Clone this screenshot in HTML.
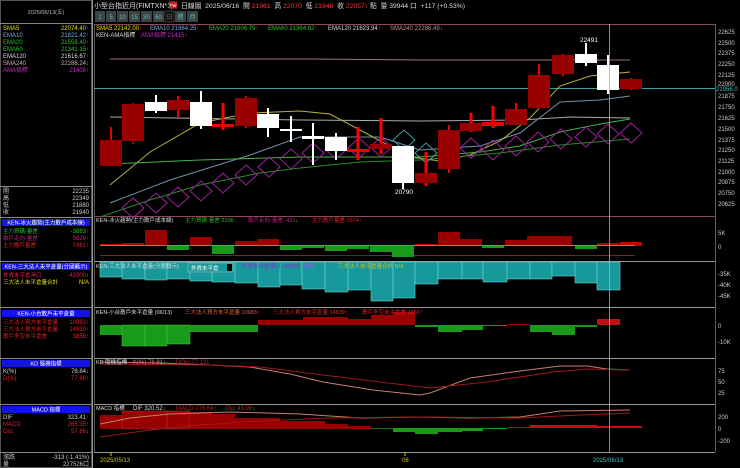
<!DOCTYPE html>
<html><head><meta charset="utf-8">
<style>
html,body{margin:0;padding:0;background:#000;}
svg{display:block;font-family:"Liberation Sans","Noto Sans CJK TC",sans-serif;}
.s{font-size:6px;}
</style></head>
<body>
<svg width="740" height="468" viewBox="0 0 740 468" xmlns="http://www.w3.org/2000/svg">
<rect width="740" height="468" fill="#000"/>

<!-- LEFT PANEL -->
<g class="s">
<rect x="0.5" y="0.5" width="91" height="467" fill="none" stroke="#555"/>
<line x1="92.5" y1="0" x2="92.5" y2="468" stroke="#999"/>
<text x="46" y="14" fill="#bbb" text-anchor="middle" font-size="5.5">2025/06/13(五)</text>
<line x1="0" y1="23.5" x2="92" y2="23.5" stroke="#888"/>
<text x="3" y="30" fill="#e8e000">SMA5</text><text x="89" y="30" fill="#e8e000" text-anchor="end">22074.40<tspan fill="#f33">↑</tspan></text>
<text x="3" y="37" fill="#7ab0e0">EMA10</text><text x="89" y="37" fill="#7ab0e0" text-anchor="end">21821.42<tspan fill="#f33">↑</tspan></text>
<text x="3" y="44" fill="#2cc02c">EMA20</text><text x="89" y="44" fill="#2cc02c" text-anchor="end">21559.40<tspan fill="#f33">↑</tspan></text>
<text x="3" y="51" fill="#2cc02c">EMA60</text><text x="89" y="51" fill="#2cc02c" text-anchor="end">21341.15<tspan fill="#f33">↑</tspan></text>
<text x="3" y="58" fill="#ddd">EMA120</text><text x="89" y="58" fill="#ddd" text-anchor="end">21616.67<tspan fill="#f33">↑</tspan></text>
<text x="3" y="65" fill="#d0b0b0">SMA240</text><text x="89" y="65" fill="#d0b0b0" text-anchor="end">22288.24<tspan fill="#2e2">↓</tspan></text>
<text x="3" y="72" fill="#d020d0">AMA指標</text><text x="89" y="72" fill="#d020d0" text-anchor="end">21408<tspan fill="#f33">↑</tspan></text>

<line x1="0" y1="186.5" x2="92" y2="186.5" stroke="#888"/>
<text x="3" y="193" fill="#ccc">開</text><text x="89" y="193" fill="#ccc" text-anchor="end">22235</text>
<text x="3" y="200" fill="#ccc">高</text><text x="89" y="200" fill="#ccc" text-anchor="end">22349</text>
<text x="3" y="207" fill="#ccc">低</text><text x="89" y="207" fill="#ccc" text-anchor="end">21880</text>
<text x="3" y="214" fill="#ccc">收</text><text x="89" y="214" fill="#ccc" text-anchor="end">21940</text>

<line x1="0" y1="217.5" x2="92" y2="217.5" stroke="#888"/>
<rect x="2" y="219" width="88" height="7" fill="#1414e0"/>
<text x="46" y="224.5" fill="#fff" text-anchor="middle" font-size="5.5">KEN-冰火趨勢(主力散戶成本線)</text>
<text x="3" y="233" fill="#2cc02c" font-size="5.5">主力買碼-量差</text><text x="89" y="233" fill="#2cc02c" text-anchor="end">-3883<tspan fill="#f33">↑</tspan></text>
<text x="3" y="240" fill="#c02080" font-size="5.5">散戶走向-量差</text><text x="89" y="240" fill="#c02080" text-anchor="end">5629<tspan fill="#f33">↑</tspan></text>
<text x="3" y="247" fill="#e02020" font-size="5.5">主力散戶量差</text><text x="89" y="247" fill="#e02020" text-anchor="end">7481<tspan fill="#f33">↑</tspan></text>

<line x1="0" y1="261.5" x2="92" y2="261.5" stroke="#888"/>
<rect x="2" y="263" width="88" height="7" fill="#1414e0"/>
<text x="46" y="268.5" fill="#fff" text-anchor="middle" font-size="5.5">KEN-三大法人未平倉量(分國籍示)</text>
<text x="3" y="277" fill="#e02050" font-size="5.5">外資未平倉淨口</text><text x="89" y="277" fill="#e02050" text-anchor="end">-42000<tspan fill="#2e2">↓</tspan></text>
<text x="3" y="284" fill="#e0e020" font-size="5.5">三大法人未平倉量合計</text><text x="89" y="284" fill="#e0e020" text-anchor="end">N/A</text>

<line x1="0" y1="307.5" x2="92" y2="307.5" stroke="#888"/>
<rect x="2" y="310" width="88" height="7" fill="#1414e0"/>
<text x="46" y="315.5" fill="#fff" text-anchor="middle" font-size="5.5">KEN-小台散戶未平倉量</text>
<text x="3" y="324" fill="#e02020" font-size="5.5">三大法人買方未平倉量</text><text x="89" y="324" fill="#e02020" text-anchor="end">10983<tspan fill="#f33">↑</tspan></text>
<text x="3" y="331" fill="#e02020" font-size="5.5">三大法人賣方未平倉量</text><text x="89" y="331" fill="#e02020" text-anchor="end">14839<tspan fill="#f33">↑</tspan></text>
<text x="3" y="338" fill="#e02020" font-size="5.5">散戶多空未平倉差</text><text x="89" y="338" fill="#e02020" text-anchor="end">3856<tspan fill="#f33">↑</tspan></text>

<line x1="0" y1="358.5" x2="92" y2="358.5" stroke="#888"/>
<rect x="2" y="360" width="88" height="7" fill="#1414e0"/>
<text x="46" y="365.5" fill="#fff" text-anchor="middle" font-size="5.5">KD 隨機指標</text>
<text x="3" y="373" fill="#ccc">K(%)</text><text x="89" y="373" fill="#ccc" text-anchor="end">78.84<tspan fill="#2e2">↓</tspan></text>
<text x="3" y="380" fill="#e02020">D(%)</text><text x="89" y="380" fill="#e02020" text-anchor="end">77.68<tspan fill="#f33">↑</tspan></text>

<line x1="0" y1="404.5" x2="92" y2="404.5" stroke="#888"/>
<rect x="2" y="406" width="88" height="7" fill="#1414e0"/>
<text x="46" y="411.5" fill="#fff" text-anchor="middle" font-size="5.5">MACD 指標</text>
<text x="3" y="419" fill="#ccc">DIF</text><text x="89" y="419" fill="#ccc" text-anchor="end">323.41<tspan fill="#f33">↑</tspan></text>
<text x="3" y="426" fill="#e02020">MACD</text><text x="89" y="426" fill="#e02020" text-anchor="end">265.35<tspan fill="#f33">↑</tspan></text>
<text x="3" y="433" fill="#e02020">Osc</text><text x="89" y="433" fill="#e02020" text-anchor="end">57.88<tspan fill="#2e2">↓</tspan></text>

<line x1="0" y1="452.5" x2="92" y2="452.5" stroke="#888"/>
<text x="3" y="459" fill="#ccc">漲跌</text><text x="89" y="459" fill="#ccc" text-anchor="end">-313 (-1.41%)</text>
<text x="3" y="466" fill="#ccc">量</text><text x="89" y="466" fill="#ccc" text-anchor="end">227526口</text>
</g>

<!-- TOP BAR -->
<g>
<text x="94" y="8" fill="#ddd" font-size="7">小型台指近月(FIMTXN*1)</text>
<rect x="169" y="1.5" width="8" height="7" fill="#d02020"/>
<text x="173" y="7" fill="#fff" font-size="4.5" text-anchor="middle">TW</text>
<text x="181" y="8" fill="#ddd" font-size="6.8">日線圖 &#160;2025/06/16 &#160;開 <tspan fill="#f33">21961</tspan> &#160;高 <tspan fill="#f33">22070</tspan> &#160;低 <tspan fill="#f33">21948</tspan> &#160;收 <tspan fill="#f33">22057</tspan><tspan fill="#f33">↑</tspan> 點 &#160;量 39944 口 &#160;+117 (+0.53%)</text>
<g font-size="6" text-anchor="middle" fill="#5fc0c0">
<rect x="95" y="11" width="10" height="11" fill="#3a4444"/><text x="100" y="19">1</text>
<rect x="106" y="11" width="10" height="11" fill="#3a4444"/><text x="111" y="19">5</text>
<rect x="117" y="11" width="11" height="11" fill="#3a4444"/><text x="122.5" y="19">10</text>
<rect x="129" y="11" width="11" height="11" fill="#3a4444"/><text x="134.5" y="19">15</text>
<rect x="141" y="11" width="11" height="11" fill="#3a4444"/><text x="146.5" y="19">30</text>
<rect x="153" y="11" width="11" height="11" fill="#3a4444"/><text x="158.5" y="19">60</text>
<rect x="165" y="11" width="9" height="11" fill="#111" stroke="#333"/><text x="169.5" y="19" fill="#777">日</text>
<rect x="175" y="11" width="11" height="11" fill="#3a4444"/><text x="180.5" y="19">週</text>
<rect x="187" y="11" width="11" height="11" fill="#3a4444"/><text x="192.5" y="19">月</text>
</g>
</g>

<!-- PANEL FRAMES -->
<g fill="none">
<line x1="94" y1="24.5" x2="715" y2="24.5" stroke="#8a4a5a"/>
<line x1="94" y1="216.5" x2="715" y2="216.5" stroke="#8a4a5a"/>
<line x1="94" y1="261.5" x2="715" y2="261.5" stroke="#999"/>
<line x1="94" y1="307.5" x2="715" y2="307.5" stroke="#999"/>
<line x1="94" y1="358.5" x2="715" y2="358.5" stroke="#999"/>
<line x1="94" y1="404.5" x2="715" y2="404.5" stroke="#999"/>
<line x1="94" y1="452.5" x2="715" y2="452.5" stroke="#999"/>
<line x1="715.5" y1="24" x2="715.5" y2="452" stroke="#8a4a5a"/>
<line x1="94.5" y1="24" x2="94.5" y2="452" stroke="#555"/>
</g>

<!-- MAIN CHART LINES -->
<g fill="none" stroke-width="1">
<polyline stroke="#a07070" points="110,59 310,59 420,60 630,60"/>
<line x1="94" y1="88.5" x2="715" y2="88.5" stroke="#3aa0a0"/>
<polyline stroke="#aaa" points="110,117 300,120 420,121 520,120 570,117 630,118"/>
<polyline stroke="#7090a8" points="110,203 170,180 250,155 300,137 380,137 420,150 480,146 520,133 560,102 600,100 630,96"/>
<polyline stroke="#b8b040" points="110,185 150,152 200,123 250,113 300,111 330,114 360,130 410,157 440,161 470,155 500,141 530,118 560,86 590,76 630,72"/>
<polyline stroke="#48b048" points="110,164 200,160 300,157 420,157 480,152 520,146 560,132 600,124 630,119"/>
<polyline stroke="#2a8a2a" points="100,217 150,200 200,185 260,173 300,168 360,162 420,160 500,153 560,145 630,139"/>
</g>
<!-- AMA diamonds -->
<g fill="none" stroke="#a020a0" stroke-width="1">
<path d="M122,208 l11,-10 l11,10 l-11,10z M145,203 l11,-10 l11,10 l-11,10z M167,197 l11,-10 l11,10 l-11,10z M190,191 l11,-10 l11,10 l-11,10z M212,183 l11,-10 l11,10 l-11,10z M235,175 l11,-10 l11,10 l-11,10z M258,167 l11,-10 l11,10 l-11,10z M280,159 l11,-10 l11,10 l-11,10z M302,153 l11,-10 l11,10 l-11,10z M325,149 l11,-10 l11,10 l-11,10z M348,148 l11,-10 l11,10 l-11,10z M370,147 l11,-10 l11,10 l-11,10z M438,150 l11,-10 l11,10 l-11,10z M460,148 l11,-10 l11,10 l-11,10z M482,150 l11,-10 l11,10 l-11,10z M505,146 l11,-10 l11,10 l-11,10z M527,142 l11,-10 l11,10 l-11,10z M550,139 l11,-10 l11,10 l-11,10z M575,137 l11,-10 l11,10 l-11,10z M597,134 l11,-10 l11,10 l-11,10z M620,133 l11,-10 l11,10 l-11,10z"/>
</g>
<path d="M393,140 l11,-10 l11,10 l-11,10z M415,153 l11,-10 l11,10 l-11,10z" fill="none" stroke="#40a0a0"/>

<!-- CANDLES -->
<g>
<g stroke-width="2">
<line x1="111" y1="127" x2="111" y2="166" stroke="#e00"/>
<line x1="133" y1="103" x2="133" y2="144" stroke="#900"/>
<line x1="156" y1="95" x2="156" y2="113" stroke="#fff"/>
<line x1="178" y1="96" x2="178" y2="117" stroke="#e00"/>
<line x1="201" y1="91" x2="201" y2="129" stroke="#fff"/>
<line x1="223" y1="103" x2="223" y2="130" stroke="#f00" stroke-width="3"/>
<line x1="246" y1="96" x2="246" y2="128" stroke="#e00"/>
<line x1="268" y1="108" x2="268" y2="137" stroke="#fff"/>
<line x1="291" y1="116" x2="291" y2="142" stroke="#fff"/>
<line x1="313" y1="123" x2="313" y2="165" stroke="#fff"/>
<line x1="336" y1="133" x2="336" y2="160" stroke="#fff"/>
<line x1="358" y1="127" x2="358" y2="160" stroke="#f00" stroke-width="3"/>
<line x1="381" y1="118" x2="381" y2="154" stroke="#f00" stroke-width="3"/>
<line x1="403" y1="146" x2="403" y2="189" stroke="#fff"/>
<line x1="426" y1="152" x2="426" y2="186" stroke="#f00" stroke-width="3"/>
<line x1="449" y1="125" x2="449" y2="173" stroke="#e00"/>
<line x1="471" y1="113" x2="471" y2="132" stroke="#f00" stroke-width="3"/>
<line x1="493" y1="106" x2="493" y2="128" stroke="#f00" stroke-width="3"/>
<line x1="516" y1="103" x2="516" y2="125" stroke="#e00"/>
<line x1="539" y1="64" x2="539" y2="109" stroke="#e00"/>
<line x1="563" y1="54" x2="563" y2="76" stroke="#e00"/>
<line x1="586" y1="43" x2="586" y2="66" stroke="#fff"/>
<line x1="608" y1="55" x2="608" y2="94" stroke="#fff"/>
<line x1="631" y1="78" x2="631" y2="90" stroke="#c00"/>
</g>
<rect x="100" y="140" width="22" height="26" fill="#990000"/>
<rect x="122" y="104" width="22" height="37" fill="#990000"/>
<rect x="145" y="102" width="22" height="9" fill="#fff"/>
<rect x="167" y="100" width="22" height="10" fill="#990000"/>
<rect x="190" y="102" width="22" height="24" fill="#fff"/>
<rect x="212" y="124" width="22" height="3" fill="#e00"/>
<rect x="235" y="98" width="22" height="28" fill="#990000"/>
<rect x="257" y="114" width="22" height="14" fill="#fff"/>
<rect x="280" y="129" width="22" height="2" fill="#fff"/>
<rect x="302" y="136" width="22" height="3" fill="#fff"/>
<rect x="325" y="137" width="22" height="14" fill="#fff"/>
<rect x="347" y="149" width="22" height="3" fill="#e00"/>
<rect x="370" y="144" width="22" height="5" fill="#990000"/>
<rect x="392" y="146" width="22" height="37" fill="#fff"/>
<rect x="415" y="173" width="22" height="10" fill="#990000"/>
<rect x="438" y="130" width="22" height="39" fill="#990000"/>
<rect x="460" y="123" width="22" height="8" fill="#990000"/>
<rect x="482" y="122" width="22" height="4" fill="#e00"/>
<rect x="505" y="109" width="22" height="16" fill="#990000"/>
<rect x="528" y="75" width="22" height="33" fill="#990000"/>
<rect x="552" y="55" width="22" height="19" fill="#990000"/>
<rect x="575" y="54" width="22" height="9" fill="#fff"/>
<rect x="597" y="65" width="22" height="25" fill="#fff"/>
<rect x="620" y="79" width="22" height="10" fill="#990000"/>
<text x="589" y="42" fill="#fff" font-size="6.5" text-anchor="middle">22491</text>
<text x="404" y="194" fill="#fff" font-size="6.5" text-anchor="middle">20790</text>
</g>

<!-- legends main -->
<g class="s">
<text x="96" y="30" fill="#e8e000">SMA5 22142.00<tspan fill="#f33">↑</tspan></text>
<text x="150" y="30" fill="#7ab0e0">EMA10 21864.25<tspan fill="#f33">↑</tspan></text>
<text x="209" y="30" fill="#2cc02c">EMA20 21606.79<tspan fill="#f33">↑</tspan></text>
<text x="268" y="30" fill="#2cc02c">EMA60 21364.62<tspan fill="#f33">↑</tspan></text>
<text x="328" y="30" fill="#ddd">EMA120 21623.94<tspan fill="#f33">↑</tspan></text>
<text x="390" y="30" fill="#c09090">SMA240 22286.49<tspan fill="#2e2">↓</tspan></text>
<text x="96" y="37" fill="#ddd">KEN-AMA指標</text>
<text x="141" y="37" fill="#d020d0">AMA指標 21415<tspan fill="#f33">↑</tspan></text>
</g>

<!-- right axis -->
<g class="s" fill="#ccc">
<text x="718" y="34">22625</text><text x="718" y="45">22500</text><text x="718" y="55">22375</text><text x="718" y="66">22250</text><text x="718" y="77">22125</text><text x="718" y="86">22000</text>
<rect x="716" y="86" width="24" height="6" fill="#000"/><text x="716" y="91" fill="#40c0c0">21956.0</text>
<text x="718" y="98">21875</text><text x="718" y="109">21750</text><text x="718" y="120">21625</text><text x="718" y="131">21500</text><text x="718" y="142">21375</text><text x="718" y="152">21250</text><text x="718" y="163">21125</text><text x="718" y="174">21000</text><text x="718" y="184">20875</text><text x="718" y="195">20750</text><text x="718" y="206">20625</text>
<text x="718" y="235">5K</text><text x="718" y="249">0</text>
<text x="718" y="276">-35K</text><text x="718" y="287">-40K</text><text x="718" y="298">-45K</text>
<text x="718" y="328">0</text><text x="718" y="344">-10K</text>
<text x="718" y="373">75</text><text x="718" y="384">50</text><text x="718" y="395">25</text>
<text x="718" y="419">200</text><text x="718" y="431">0</text><text x="718" y="443">-200</text>
</g>

<!-- PANEL 2 -->
<g>
<line x1="100" y1="255.5" x2="635" y2="255.5" stroke="#702040"/>
<rect x="100" y="244" width="22" height="2" fill="#c00"/>
<rect x="122" y="243" width="22" height="3" fill="#a00"/>
<rect x="145" y="230" width="22" height="16" fill="#990000"/>
<rect x="167" y="246" width="22" height="4" fill="#1a9a1a"/>
<rect x="190" y="237" width="22" height="9" fill="#990000"/>
<rect x="212" y="246" width="22" height="8" fill="#1a9a1a"/>
<rect x="235" y="241" width="22" height="5" fill="#990000"/>
<rect x="257" y="239" width="22" height="7" fill="#990000"/>
<rect x="280" y="246" width="22" height="4" fill="#1a9a1a"/>
<rect x="302" y="246" width="22" height="2" fill="#1a9a1a"/>
<rect x="325" y="246" width="22" height="5" fill="#1a9a1a"/>
<rect x="347" y="246" width="22" height="3" fill="#1a9a1a"/>
<rect x="370" y="246" width="22" height="6" fill="#1a9a1a"/>
<rect x="392" y="246" width="22" height="11" fill="#1a9a1a"/>
<rect x="415" y="244" width="22" height="2" fill="#c00"/>
<rect x="438" y="232" width="22" height="14" fill="#990000"/>
<rect x="460" y="239" width="22" height="7" fill="#990000"/>
<rect x="482" y="246" width="22" height="2" fill="#1a9a1a"/>
<rect x="505" y="240" width="22" height="6" fill="#990000"/>
<rect x="527" y="236" width="45" height="10" fill="#990000"/>
<rect x="575" y="246" width="22" height="3" fill="#1a9a1a"/>
<rect x="597" y="243" width="22" height="3" fill="#a00"/>
<rect x="620" y="242" width="22" height="4" fill="#c00"/>
<line x1="100" y1="245.5" x2="635" y2="245.5" stroke="#d07030"/>
<g class="s">
<text x="96" y="222" fill="#ddd" font-size="5.5">KEN-冰火趨勢(主力散戶成本線)</text>
<text x="185" y="222" fill="#2cc02c" font-size="5.5">主力買碼-量差 2106<tspan fill="#f33">↑</tspan></text>
<text x="248" y="222" fill="#c02080" font-size="5.5">散戶走向-量差 -432<tspan fill="#2e2">↓</tspan></text>
<text x="312" y="222" fill="#e02020" font-size="5.5">主力散戶量差 1674<tspan fill="#f33">↑</tspan></text>
</g>
</g>

<!-- PANEL 3 -->
<g fill="#17999c" stroke="#6fd0d0" stroke-width="0.6">
<rect x="100" y="262" width="22" height="15"/>
<rect x="122" y="262" width="23" height="17"/>
<rect x="145" y="262" width="22" height="18"/>
<rect x="167" y="262" width="23" height="17"/>
<rect x="190" y="262" width="22" height="19"/>
<rect x="212" y="262" width="23" height="20"/>
<rect x="235" y="262" width="23" height="21"/>
<rect x="258" y="262" width="22" height="25"/>
<rect x="280" y="262" width="22" height="23"/>
<rect x="302" y="262" width="23" height="27"/>
<rect x="325" y="262" width="23" height="30"/>
<rect x="348" y="262" width="23" height="28"/>
<rect x="371" y="262" width="22" height="39"/>
<rect x="393" y="262" width="22" height="36"/>
<rect x="415" y="262" width="23" height="22"/>
<rect x="438" y="262" width="24" height="17"/>
<rect x="462" y="262" width="21" height="17"/>
<rect x="483" y="262" width="24" height="20"/>
<rect x="507" y="262" width="23" height="17"/>
<rect x="530" y="262" width="22" height="17"/>
<rect x="552" y="262" width="23" height="14"/>
<rect x="575" y="262" width="22" height="21"/>
<rect x="597" y="262" width="23" height="28"/>
</g>
<g class="s">
<text x="96" y="268" fill="#ddd" font-size="5.5">KEN-三大法人未平倉量(分國籍示)</text>
<rect x="188" y="263" width="45" height="9" fill="#17999c" stroke="#bbb" stroke-width="0.5"/>
<text x="191" y="270" fill="#fff" font-size="5.5">外資未平倉</text>
<rect x="227" y="264" width="5" height="7" fill="#000"/>
<text x="242" y="268" fill="#a020d0" font-size="5.5">外資未平倉淨口 -42000<tspan fill="#2e2">↓</tspan> <tspan fill="#a050ff">(N/A)</tspan></text>
<text x="338" y="268" fill="#d0c020" font-size="5.5">三大法人未平倉量合計 N/A</text>
</g>

<!-- PANEL 4 -->
<g>
<rect x="100" y="325" width="22" height="10" fill="#1a9a1a"/>
<rect x="122" y="325" width="23" height="21" fill="#1a9a1a" stroke="#4c4" stroke-width="0.5"/>
<rect x="145" y="325" width="22" height="21" fill="#1a9a1a" stroke="#4c4" stroke-width="0.5"/>
<rect x="167" y="325" width="23" height="19" fill="#1a9a1a" stroke="#4c4" stroke-width="0.5"/>
<rect x="190" y="325" width="22" height="7" fill="#1a9a1a"/>
<rect x="212" y="325" width="23" height="7" fill="#1a9a1a"/>
<rect x="235" y="325" width="23" height="7" fill="#1a9a1a"/>
<rect x="258" y="320" width="45" height="5" fill="#990000"/>
<rect x="303" y="317" width="45" height="8" fill="#990000"/>
<rect x="348" y="319" width="23" height="6" fill="#990000"/>
<rect x="371" y="315" width="22" height="10" fill="#990000"/>
<rect x="393" y="312" width="22" height="13" fill="#990000"/>
<rect x="415" y="325" width="23" height="2" fill="#1a9a1a"/>
<rect x="438" y="325" width="24" height="7" fill="#1a9a1a"/>
<rect x="462" y="325" width="21" height="5" fill="#1a9a1a"/>
<rect x="483" y="325" width="24" height="1" fill="#1a9a1a"/>
<rect x="507" y="324" width="23" height="1" fill="#900"/>
<rect x="530" y="325" width="22" height="7" fill="#1a9a1a"/>
<rect x="552" y="325" width="23" height="10" fill="#1a9a1a"/>
<rect x="575" y="325" width="22" height="2" fill="#1a9a1a"/>
<rect x="597" y="319" width="23" height="6" fill="#c01010"/>
<g class="s">
<text x="96" y="314" fill="#ddd" font-size="5.5">KEN-小台散戶未平倉量 (06/13)</text>
<text x="185" y="314" fill="#e06040" font-size="5.5">三大法人買方未平倉量 10983<tspan fill="#f33">↑</tspan></text>
<text x="273" y="314" fill="#e02020" font-size="5.5">三大法人賣方未平倉量 14839<tspan fill="#f33">↑</tspan></text>
<text x="362" y="314" fill="#e02020" font-size="5.5">散戶多空未平倉差 3856<tspan fill="#f33">↑</tspan></text>
</g>
</g>

<!-- KD -->
<g fill="none">
<polyline stroke="#c08070" points="100,362 160,363 210,365 250,367 290,374 323,382 373,390 420,395 430,393 470,378 520,371 560,366 587,366 607,369 630,370"/>
<polyline stroke="#a01818" points="100,364 210,365 260,367 323,375 380,382 430,388 487,382 553,372 587,369 630,370"/>
<g class="s">
<text x="96" y="364" fill="#ddd" font-size="5.5">KD 隨機指標</text>
<text x="133" y="364" fill="#c08070">K(%) 76.81<tspan fill="#2e2">↓</tspan></text>
<text x="176" y="364" fill="#c02020">D(%) 77.12<tspan fill="#2e2">↓</tspan></text>
</g>
</g>

<!-- MACD -->
<g>
<rect x="100" y="415" width="22" height="14" fill="#990000"/>
<rect x="122" y="411" width="45" height="18" fill="#990000" stroke="#c44" stroke-width="0.4"/>
<rect x="167" y="411" width="23" height="18" fill="#990000" stroke="#c44" stroke-width="0.4"/>
<rect x="190" y="412" width="22" height="17" fill="#990000"/>
<rect x="212" y="414" width="23" height="15" fill="#990000"/>
<rect x="235" y="418" width="45" height="11" fill="#990000"/>
<rect x="280" y="421" width="45" height="8" fill="#990000"/>
<rect x="325" y="424" width="23" height="5" fill="#990000"/>
<rect x="348" y="426" width="23" height="3" fill="#990000"/>
<rect x="371" y="428" width="22" height="1" fill="#1a6a1a"/>
<rect x="393" y="428" width="22" height="4" fill="#1a9a1a"/>
<rect x="415" y="428" width="23" height="6" fill="#1a9a1a"/>
<rect x="438" y="428" width="24" height="4" fill="#1a9a1a"/>
<rect x="462" y="428" width="21" height="3" fill="#1a9a1a"/>
<rect x="483" y="428" width="24" height="1" fill="#1a9a1a"/>
<rect x="507" y="427" width="23" height="1" fill="#c00"/>
<rect x="530" y="425" width="67" height="3" fill="#c01010"/>
<rect x="597" y="426" width="45" height="2" fill="#c01010"/>
<polyline fill="none" stroke="#c08070" points="100,424 130,418 170,414 230,412 300,414 360,418 420,417 470,418 520,417 560,411 630,410"/>
<polyline fill="none" stroke="#a01818" points="100,437 150,430 200,425 260,421 330,418 420,417 520,418 580,415 630,413"/>
<g class="s">
<text x="96" y="410" fill="#ddd" font-size="5.5">MACD 指標</text>
<text x="133" y="410" fill="#ddd">DIF 320.52<tspan fill="#2e2">↓</tspan></text>
<text x="176" y="410" fill="#c02020">MACD 276.64<tspan fill="#f33">↑</tspan></text>
<text x="225" y="410" fill="#c02020">Osc 43.98<tspan fill="#2e2">↓</tspan></text>
</g>
</g>

<!-- crosshair -->
<line x1="609.5" y1="24" x2="609.5" y2="452" stroke="#d0a0b0" stroke-width="0.8"/>

<!-- date axis -->
<g class="s">
<line x1="111" y1="452" x2="111" y2="456" stroke="#cc0"/>
<text x="100" y="462" fill="#d0c020">2025/05/13</text>
<line x1="405" y1="452" x2="405" y2="456" stroke="#cc0"/>
<text x="402" y="462" fill="#d0c020">06</text>
<text x="593" y="462" fill="#40c0c0">2025/06/13</text>
</g>
</svg>
</body></html>
